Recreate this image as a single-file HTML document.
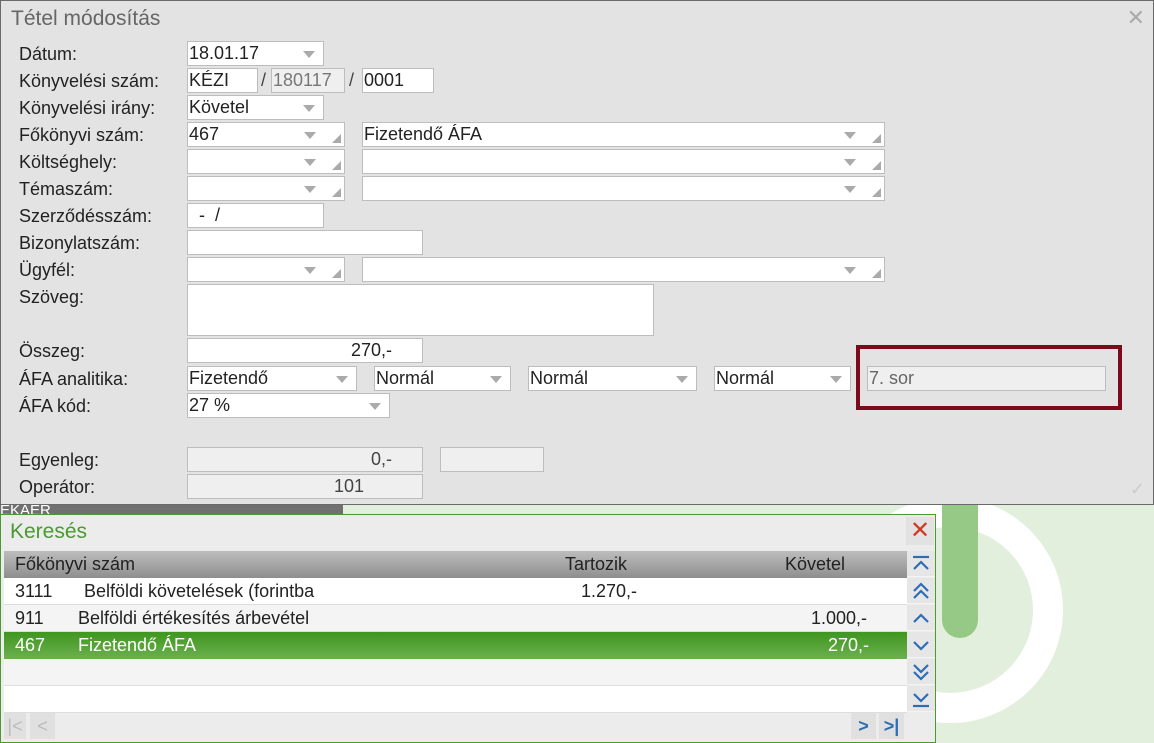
<!DOCTYPE html>
<html><head><meta charset="utf-8"><style>
*{box-sizing:border-box;margin:0;padding:0}
body{width:1154px;height:743px;position:relative;overflow:hidden;background:#e3efdd;font-family:"Liberation Sans",sans-serif;font-size:18px;color:#222}
.a{position:absolute}
#dlg{left:0;top:0;width:1154px;height:505px;background:#e3e3e3;border:1px solid #6a6a6a}
.t{position:absolute;left:10px;top:6px;font-size:21px;color:#666}
.l{position:absolute;left:18px;font-size:18px;color:#222;line-height:20px}
.i{position:absolute;background:#fff;border:1px solid #bdbdbd;height:25px;line-height:23px;padding-left:1px;font-size:18px;white-space:nowrap;overflow:hidden}
.g{background:#efefef;color:#666}
.r{text-align:right;padding-right:30px}
.dd:after{content:"";position:absolute;right:8px;top:9px;border-left:6px solid transparent;border-right:6px solid transparent;border-top:7px solid #aaa}
.dd2:after{content:"";position:absolute;right:28px;top:9px;border-left:6px solid transparent;border-right:6px solid transparent;border-top:7px solid #aaa}
.dd2:before{content:"";position:absolute;right:3px;bottom:3px;border-left:9px solid transparent;border-bottom:9px solid #aaa}
#ser{left:0;top:514px;width:936px;height:229px;background:#ececec;border:1px solid #4a9a30}
.row{position:absolute;left:3px;width:903px;height:27px;line-height:27px;font-size:18px;border-bottom:1px solid #ddd}
.nb{position:absolute;left:906px;width:28px;height:26px;background:#e6e6e6;border-bottom:1px solid #f4f4f4}
.nb svg{position:absolute;left:5px;top:4px}
</style></head><body>
<div class="a" style="left:0;top:504px;width:343px;height:12px;background:#707070"></div>
<div class="a" style="left:0;top:502px;font-size:15px;color:#fff">EKÁER</div>
<svg class="a" style="left:780px;top:480px" width="374" height="263"><circle cx="170" cy="130" r="98" fill="none" stroke="#fff" stroke-width="30"/><line x1="180" y1="0" x2="180" y2="140" stroke="#97c986" stroke-width="36" stroke-linecap="round"/></svg>
<div id="dlg" class="a">
<div class="t">Tétel módosítás</div>
<div class="a" style="right:8px;top:4px;font-size:22px;color:#aaa">✕</div>
<div class="a" style="right:8px;bottom:4px;font-size:18px;color:#ccc">✓</div>
<div class="l" style="top:43px">Dátum:</div>
<div class="l" style="top:70px">Könyvelési szám:</div>
<div class="l" style="top:97px">Könyvelési irány:</div>
<div class="l" style="top:124px">Főkönyvi szám:</div>
<div class="l" style="top:151px">Költséghely:</div>
<div class="l" style="top:178px">Témaszám:</div>
<div class="l" style="top:205px">Szerződésszám:</div>
<div class="l" style="top:232px">Bizonylatszám:</div>
<div class="l" style="top:259px">Ügyfél:</div>
<div class="l" style="top:286px">Szöveg:</div>
<div class="l" style="top:340px">Összeg:</div>
<div class="l" style="top:368px">ÁFA analitika:</div>
<div class="l" style="top:395px">ÁFA kód:</div>
<div class="l" style="top:449px">Egyenleg:</div>
<div class="l" style="top:476px">Operátor:</div>
<div class="i dd" style="left:186px;top:40px;width:137px">18.01.17</div>
<div class="i" style="left:186px;top:67px;width:71px">KÉZI</div>
<div class="a" style="left:260px;top:69px;color:#444">/</div>
<div class="i g" style="left:270px;top:67px;width:74px;color:#777">180117</div>
<div class="a" style="left:348px;top:69px;color:#444">/</div>
<div class="i" style="left:361px;top:67px;width:72px">0001</div>
<div class="i dd" style="left:186px;top:94px;width:137px">Követel</div>
<div class="i dd2" style="left:186px;top:121px;width:158px">467</div>
<div class="i dd2" style="left:361px;top:121px;width:523px">Fizetendő ÁFA</div>
<div class="i dd2" style="left:186px;top:148px;width:158px"></div>
<div class="i dd2" style="left:361px;top:148px;width:523px"></div>
<div class="i dd2" style="left:186px;top:175px;width:158px"></div>
<div class="i dd2" style="left:361px;top:175px;width:523px"></div>
<div class="i" style="left:186px;top:202px;width:137px">&nbsp;&nbsp;-&nbsp;&nbsp;/</div>
<div class="i" style="left:186px;top:229px;width:236px"></div>
<div class="i dd2" style="left:186px;top:256px;width:158px"></div>
<div class="i dd2" style="left:361px;top:256px;width:523px"></div>
<div class="i" style="left:186px;top:283px;width:467px;height:52px"></div>
<div class="i r" style="left:186px;top:337px;width:236px">270,-</div>
<div class="i dd" style="left:186px;top:365px;width:170px">Fizetendő</div>
<div class="i dd" style="left:373px;top:365px;width:137px">Normál</div>
<div class="i dd" style="left:527px;top:365px;width:169px">Normál</div>
<div class="i dd" style="left:713px;top:365px;width:137px">Normál</div>
<div class="a" style="left:855px;top:344px;width:266px;height:65px;border:4px solid #7c0a1c"></div>
<div class="i g" style="left:866px;top:365px;width:239px">7. sor</div>
<div class="i dd" style="left:186px;top:392px;width:203px">27 %</div>
<div class="i g r" style="left:186px;top:446px;width:236px;color:#444">0,-</div>
<div class="i g" style="left:439px;top:446px;width:104px"></div>
<div class="i g r" style="left:186px;top:473px;width:236px;color:#444;padding-right:58px">101</div>
</div>
<div id="ser" class="a">
<div class="a" style="left:9px;top:5px;font-size:21px;color:#4a9a30">Keresés</div>
<div class="a" style="left:905px;top:2px;width:28px;height:28px;background:#e2e2e2;color:#d03a24;font-size:24px;text-align:center;line-height:28px">✕</div>
<div class="row" style="top:36px;height:27px;background:linear-gradient(#bdbdbd,#8e8e8e);border:0;line-height:26px"><span class="a" style="left:11px">Főkönyvi szám</span><span class="a" style="left:561px">Tartozik</span><span class="a" style="left:781px">Követel</span></div>
<div class="row" style="top:63px;background:#fff"><span class="a" style="left:11px">3111</span><span class="a" style="left:80px">Belföldi követelések (forintba</span><span class="a" style="left:577px">1.270,-</span></div>
<div class="row" style="top:90px;background:#f4f4f4"><span class="a" style="left:11px">911</span><span class="a" style="left:74px">Belföldi értékesítés árbevétel</span><span class="a" style="left:807px">1.000,-</span></div>
<div class="row" style="top:117px;background:linear-gradient(#3f961f,#6cb04f);color:#fff;border:0"><span class="a" style="left:11px">467</span><span class="a" style="left:74px">Fizetendő ÁFA</span><span class="a" style="left:824px">270,-</span></div>
<div class="row" style="top:144px;background:#f4f4f4"></div>
<div class="row" style="top:171px;background:#fff"></div>
<div class="a" style="left:3px;top:198px;width:22px;height:26px;background:#e0e0e0;color:#bbb;text-align:center;line-height:26px">|&lt;</div>
<div class="a" style="left:29px;top:198px;width:25px;height:26px;background:#e0e0e0;color:#bbb;text-align:center;line-height:26px">&lt;</div>
<div class="a" style="left:850px;top:198px;width:25px;height:26px;background:#e0e0e0;color:#2d6db5;text-align:center;line-height:26px;font-weight:bold">&gt;</div>
<div class="a" style="left:878px;top:198px;width:25px;height:26px;background:#e0e0e0;color:#2d6db5;text-align:center;line-height:26px;font-weight:bold">&gt;|</div>
<div class="nb" style="top:36px"><svg width="18" height="18" fill="none" stroke="#2d6db5" stroke-width="2.2"><line x1="1" y1="2" x2="17" y2="2"/><polyline points="2,14 9,7 16,14"/></svg></div>
<div class="nb" style="top:63px"><svg width="18" height="18" fill="none" stroke="#2d6db5" stroke-width="2.2"><polyline points="2,9 9,2 16,9"/><polyline points="2,16 9,9 16,16"/></svg></div>
<div class="nb" style="top:90px"><svg width="18" height="18" fill="none" stroke="#2d6db5" stroke-width="2.2"><polyline points="2,13 9,6 16,13"/></svg></div>
<div class="nb" style="top:117px"><svg width="18" height="18" fill="none" stroke="#2d6db5" stroke-width="2.2"><polyline points="2,6 9,13 16,6"/></svg></div>
<div class="nb" style="top:144px"><svg width="18" height="18" fill="none" stroke="#2d6db5" stroke-width="2.2"><polyline points="2,2 9,9 16,2"/><polyline points="2,9 9,16 16,9"/></svg></div>
<div class="nb" style="top:171px"><svg width="18" height="18" fill="none" stroke="#2d6db5" stroke-width="2.2"><polyline points="2,4 9,11 16,4"/><line x1="1" y1="16" x2="17" y2="16"/></svg></div>
</div>
</body></html>
